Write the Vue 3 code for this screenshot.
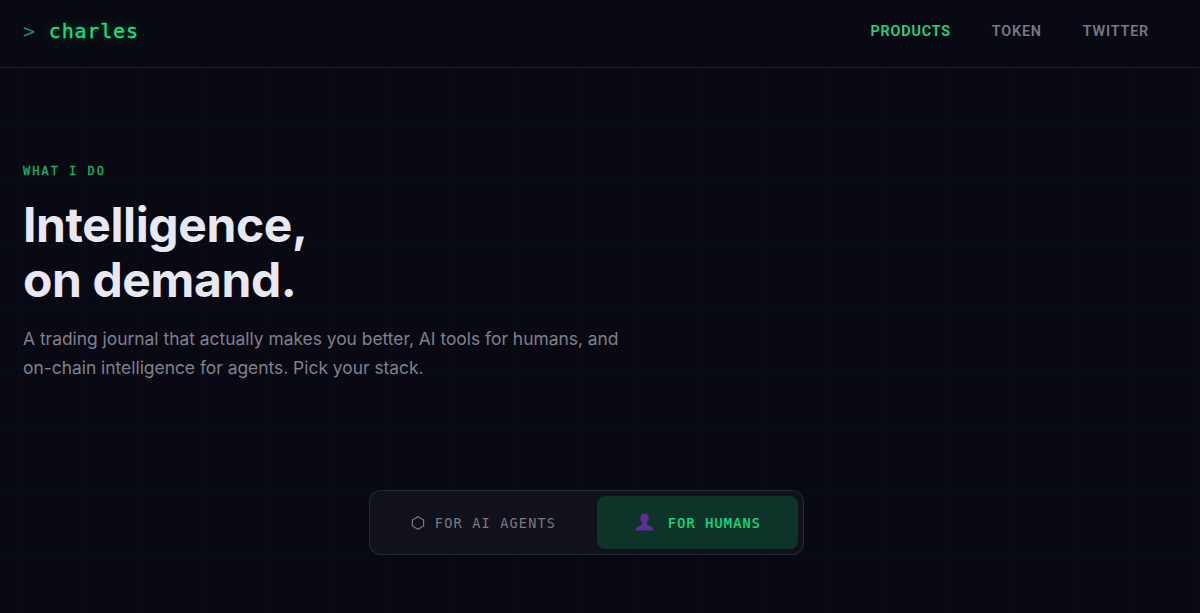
<template>
  <div class="page">
    <header class="topbar">
      <div class="logo"><span class="prompt">&gt;</span><span class="name">charles</span></div>
      <nav class="nav">
        <a v-for="link in links" :key="link" class="nav-link" :class="{ active: link === 'PRODUCTS' }">{{ link }}</a>
      </nav>
    </header>

    <section class="hero">
      <div class="eyebrow">WHAT I DO</div>
      <h1 class="title">Intelligence,<br>on demand.</h1>
      <p class="lead">A trading journal that actually makes you better, AI tools for humans, and<br>on-chain intelligence for agents. Pick your stack.</p>
    </section>

    <div class="switch-row">
      <div class="switch">
        <button class="tab agents">
          <svg class="hex" width="14" height="14" viewBox="0 0 14 14" fill="none">
            <path d="M7 .8 12.600 4v6L7 13.200 1.400 10V4z" stroke="currentColor" stroke-width="1.200" />
          </svg>
          FOR AI AGENTS
        </button>
        <button class="tab humans">
          <svg class="person" width="21" height="21" viewBox="0 0 20 20">
            <path d="M10 1.500c2.600 0 4 1.900 4 4.300 0 1.900-.8 3.500-1.800 4.500v1.300c0 .8 3.800 1.700 5.600 3.400.5.500.8 1.500.8 2.500H1.400c0-1 .3-2 .8-2.500 1.800-1.700 5.600-2.600 5.600-3.400v-1.300C6.800 9.300 6 7.700 6 5.800c0-2.400 1.400-4.300 4-4.300z" fill="#5c2e96" />
          </svg>
          FOR HUMANS
        </button>
      </div>
    </div>
  </div>
</template>

<script setup>
const links = ['PRODUCTS', 'TOKEN', 'TWITTER']
</script>

<style>
html, body {
  margin: 0;
  background: #080912;
}
</style>

<style scoped>
.page {
  height: 613px;
  overflow: hidden;
  background-color: #080912;
  background-image:
    linear-gradient(rgba(0, 255, 136, 0.028) 1px, transparent 1px),
    linear-gradient(90deg, rgba(0, 255, 136, 0.028) 1px, transparent 1px);
  background-size: 62px 62px;
  background-position: 19px -4px;
  font-family: "Inter", sans-serif;
}
.topbar {
  height: 68px;
  box-sizing: border-box;
  border-bottom: 1px solid rgba(0, 255, 136, 0.17);
  display: flex;
  align-items: center;
  justify-content: space-between;
  padding: 0 51px 6px 23px;
  background: #080912;
}
.logo {
  display: flex;
  gap: 13px;
  font-family: "DejaVu Sans Mono", monospace;
  font-size: 20px;
  letter-spacing: 0.8px;
}
.prompt { color: #1f8a57; }
.name {
  color: #15e083;
  -webkit-text-stroke: 0.3px #15e083;
  text-shadow: 0 0 14px rgba(0, 255, 136, 0.35);
}
.nav {
  display: flex;
  gap: 41px;
  padding-top: 2px;
}
.nav-link {
  font-family: "Roboto", sans-serif;
  font-size: 14.400px;
  font-weight: 600;
  letter-spacing: 0.8px;
  color: #787885;
}
.nav-link.active { color: #1fd683; }
.hero {
  padding: 96px 23px 0;
}
.eyebrow {
  font-family: "DejaVu Sans Mono", monospace;
  font-size: 12px;
  letter-spacing: 2px;
  line-height: 14px;
  color: #17b56b;
  -webkit-text-stroke: 0.3px #17b56b;
}
.title {
  margin: 19px 0 0;
  font-size: 48px;
  line-height: 55px;
  font-weight: 700;
  letter-spacing: -0.4px;
  color: #e8e8f2;
}
.lead {
  margin: 17px 0 0;
  font-size: 17.400px;
  line-height: 29px;
  color: #80808c;
}
.switch-row {
  display: flex;
  justify-content: center;
  margin-top: 108px;
  padding-right: 27px;
}
.switch {
  width: 435px;
  height: 65px;
  box-sizing: border-box;
  padding: 5px;
  display: flex;
  justify-content: space-between;
  border: 1px solid rgba(60, 200, 170, 0.18);
  border-radius: 12px;
  background: #10111a;
}
.tab {
  border: 0;
  border-radius: 8px;
  background: transparent;
  display: flex;
  align-items: center;
  justify-content: center;
  font-family: "DejaVu Sans Mono", monospace;
  font-size: 13.500px;
  letter-spacing: 1.200px;
  color: #7a7a87;
}
.agents {
  width: 217px;
  gap: 10px;
}
.humans {
  width: 201px;
  gap: 13px;
  background: #0e3429;
  color: #15e083;
  -webkit-text-stroke: 0.2px #15e083;
}
</style>
